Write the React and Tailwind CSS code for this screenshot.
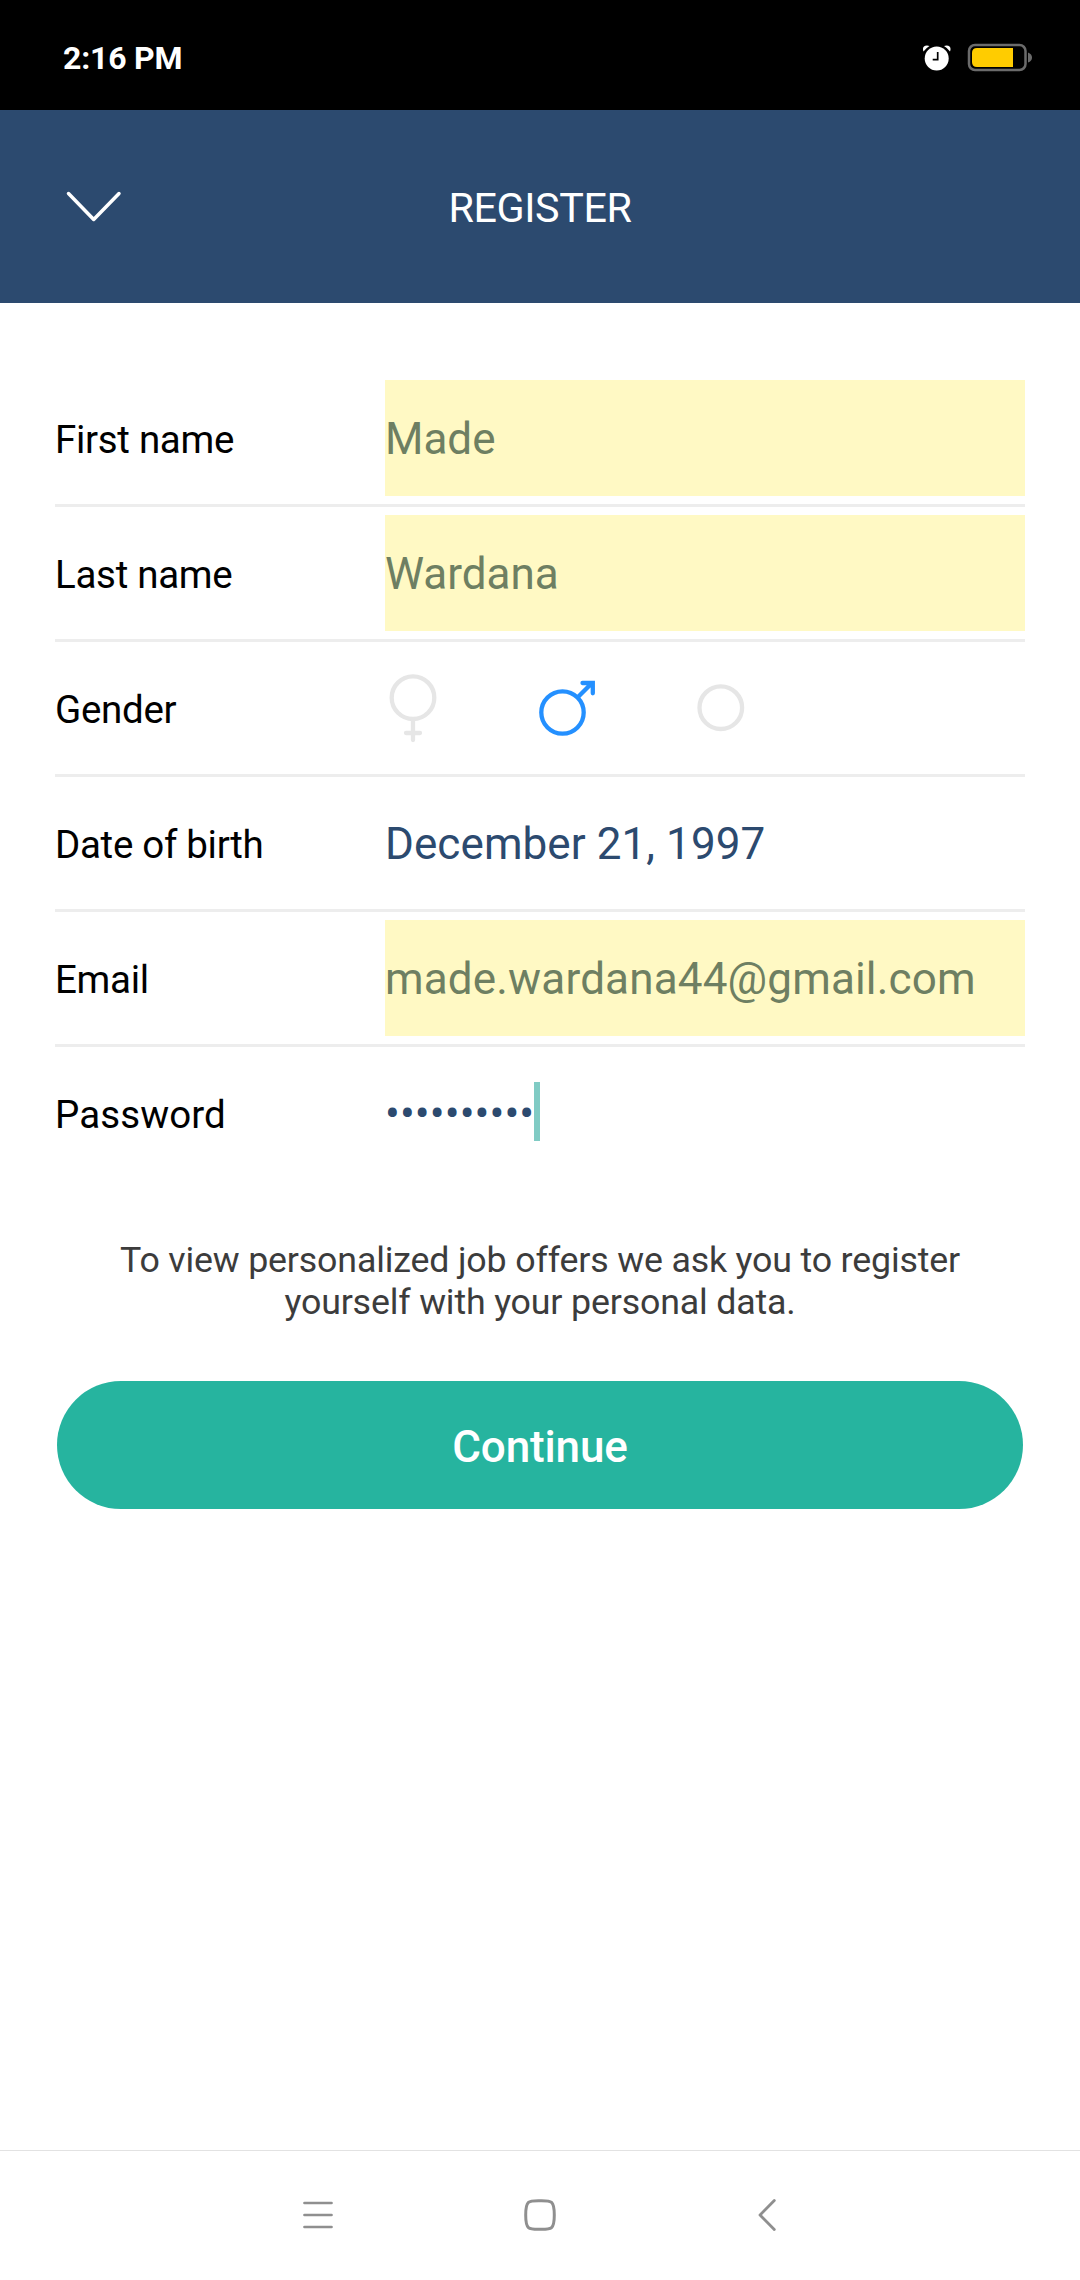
function StatusBar() {
  return (
    <div className="flex h-[110px] items-center justify-between bg-black pr-[46px] pl-[63px] text-white">
      <span className="mt-[5px] text-[32px] leading-[38px] font-bold tracking-[-0.2px]">2:16 PM</span>
      <div className="flex items-center gap-4 pt-[2px]">
        <svg className="h-8 w-8" viewBox="0 0 32 32">
          <circle cx="17.700" cy="18.500" r="12" fill="#fff" />
          <path d="M4.5 11.5Q2.500 6 8 5.500L10.500 6Q7 8 4.500 11.500ZM31 11.500Q33 6 27.500 5.500L25 6Q28.500 8 31 11.500Z" fill="#fff" />
          <path d="M18.700 12v7.700h-5" fill="none" stroke="#000" strokeWidth="1.700" />
        </svg>
        <svg className="h-8 w-[67px]" viewBox="0 0 67 32">
          <rect x="2" y="5" width="56.500" height="25" rx="6" fill="none" stroke="#6b6b6b" strokeWidth="2.500" />
          <path d="M46 8v19H10q-5 0-5-5V13q0-5 5-5Z" fill="#fc0" />
          <path d="M61 12.500q4 1.500 4 5t-4 5Z" fill="#6b6b6b" />
        </svg>
      </div>
    </div>
  );
}

function Header() {
  return (
    <header className="grid h-[193px] grid-cols-3 items-center bg-[#2c4a6f] text-white">
      <svg className="ml-[64px] h-9 w-[60px]" viewBox="0 0 60 36" fill="none" stroke="currentColor" strokeWidth="3.500" strokeLinecap="round" strokeLinejoin="round">
        <path d="M4.500 4.500L29.700 30.500L55 4.500" />
      </svg>
      <h1 className="mt-[2px] text-center text-[41.250px] leading-[48px] tracking-[-0.4px]">REGISTER</h1>
    </header>
  );
}

function Row({ label, last, children }) {
  return (
    <div className={last ? "flex h-[132px]" : "flex h-[135px] border-b-[3px] border-[#ededed]"}>
      <div className={last ? "w-[330px] pt-[2px] text-[38.500px] leading-[132px] tracking-[0.1px] text-black" : "w-[330px] pt-[2px] text-[38.500px] leading-[132px] tracking-[-0.3px] text-black"}>{label}</div>
      <div className="flex flex-1 items-center text-[44px] text-[#2c4a6f]">{children}</div>
    </div>
  );
}

function Filled({ children }) {
  return <div className="h-[116px] w-full bg-[#fff9c4] text-[#6e7f62] leading-[119px]">{children}</div>;
}

function GenderIcons() {
  return (
    <div className="flex items-center">
      <svg className="h-20 w-14" viewBox="0 0 56 80" fill="none" stroke="#e6e6e6" strokeWidth="4.300" strokeLinecap="round">
        <circle cx="28" cy="29.700" r="21.300" />
        <path d="M28 52v20M21 65h14" />
      </svg>
      <svg className="ml-[94px] h-20 w-16" viewBox="0 0 64 80" fill="none" stroke="#2490ff" strokeWidth="4.300" strokeLinecap="round">
        <circle cx="27.500" cy="44.500" r="21.200" />
        <path d="M43.500 28.500L57 15M47.500 15h10.300v10.300" />
      </svg>
      <svg className="ml-[94px] h-20 w-14" viewBox="0 0 56 80" fill="none" stroke="#e6e6e6" strokeWidth="4.300">
        <circle cx="27.800" cy="39.700" r="21.300" />
      </svg>
    </div>
  );
}

function NavBar() {
  return (
    <nav className="flex h-[130px] items-center justify-between border-t border-[#e2e2e2] px-[298px]">
      <svg className="h-10 w-10" viewBox="0 0 40 40" fill="none" stroke="#8f8f8f" strokeWidth="2.700" strokeLinecap="round">
        <path d="M6.500 7h27M6.500 19h27M6.500 31h27" />
      </svg>
      <svg className="h-10 w-10" viewBox="0 0 40 40" fill="none" stroke="#8f8f8f" strokeWidth="3">
        <path d="M20 4.700C31 4.700 34.300 4 34.300 19S31 33.300 20 33.300S5.700 34 5.700 19S9 4.700 20 4.700Z" />
      </svg>
      <svg className="h-10 w-10" viewBox="0 0 40 40" fill="none" stroke="#8f8f8f" strokeWidth="2.800" strokeLinecap="round" strokeLinejoin="round">
        <path d="M32.300 4.500L18 19L32.300 33.500" />
      </svg>
    </nav>
  );
}

export default function App() {
  return (
    <div className="flex h-[2280px] w-[1080px] flex-col bg-white font-['Roboto',sans-serif]">
      <StatusBar />
      <Header />
      <main className="flex-1 px-[55px] pt-[69px]">
        <Row label="First name"><Filled>Made</Filled></Row>
        <Row label="Last name"><Filled>Wardana</Filled></Row>
        <Row label="Gender"><GenderIcons /></Row>
        <Row label="Date of birth"><span className="pt-[2px] tracking-[0.08px]">December 21, 1997</span></Row>
        <Row label="Email"><Filled><span className="tracking-[0.17px]">made.wardana44@gmail.com</span></Filled></Row>
        <Row label="Password" last>
          <span className="pt-[2px] tracking-[0.08px]">••••••••••</span>
          <span className="-mt-[3px] h-[59px] w-[6px] bg-[#80cbc4]" />
        </Row>
        <p className="mt-[60px] text-center text-[35.750px] leading-[42px] tracking-[-0.170px] text-[#3c3c3c]">
          To view personalized job offers we ask you to register
          <br />
          yourself with your personal data.
        </p>
        <button className="mx-[2px] mt-[58px] block h-32 w-[966px] rounded-full bg-[#26b49f] text-[44px] leading-[132px] font-medium tracking-[-0.15px] text-white">
          Continue
        </button>
      </main>
      <NavBar />
    </div>
  );
}
